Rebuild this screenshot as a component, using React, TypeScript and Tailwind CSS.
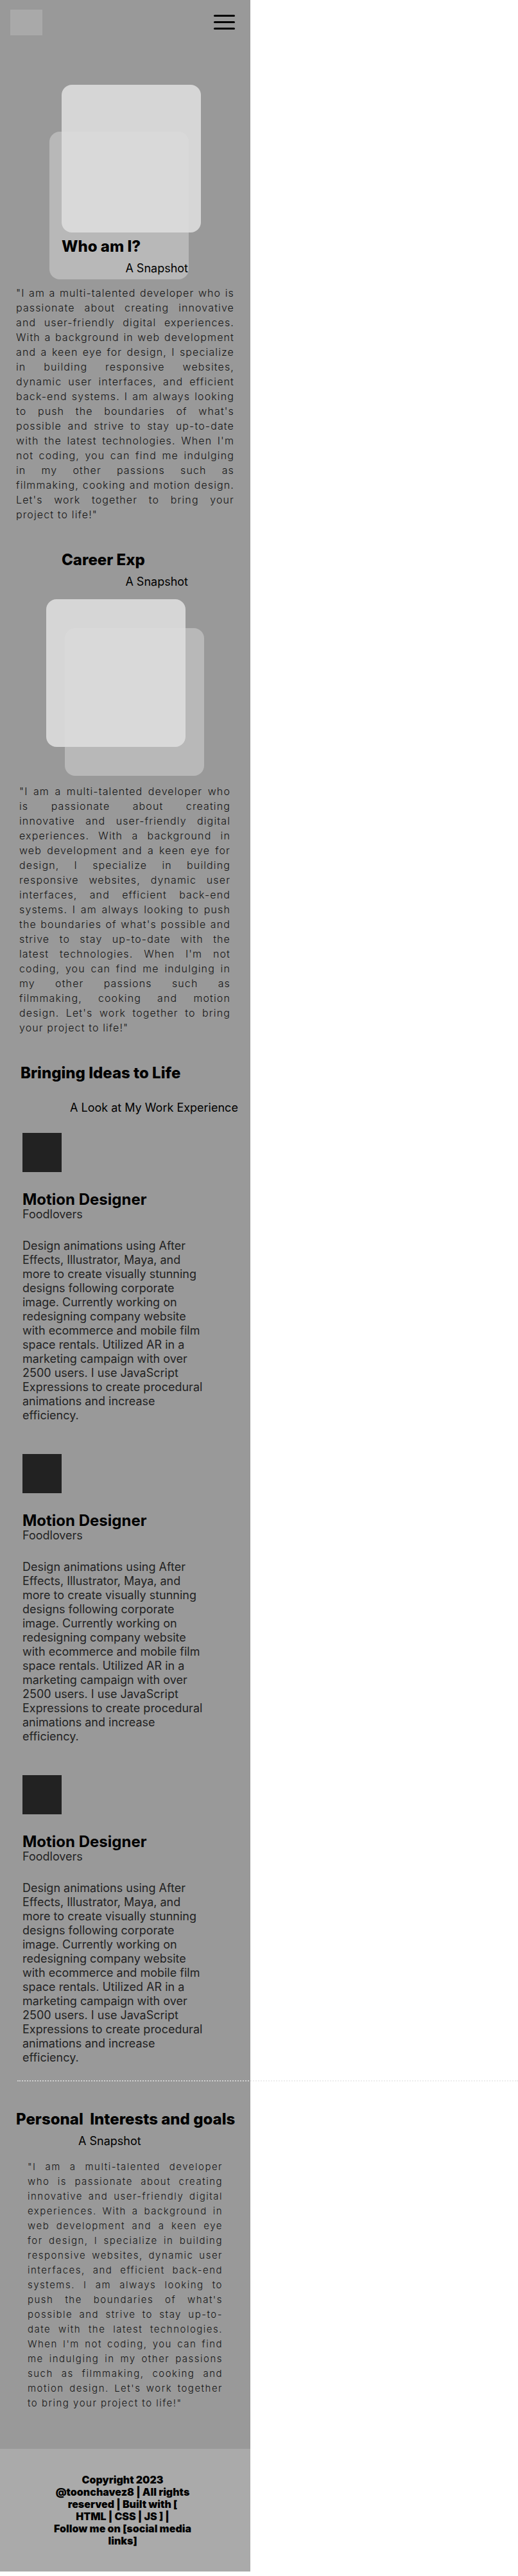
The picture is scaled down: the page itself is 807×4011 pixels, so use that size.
const bio =
  "\"I am a multi-talented developer who is passionate about creating innovative and user-friendly digital experiences. With a background in web development and a keen eye for design, I specialize in building responsive websites, dynamic user interfaces, and efficient back-end systems. I am always looking to push the boundaries of what's possible and strive to stay up-to-date with the latest technologies. When I'm not coding, you can find me indulging in my other passions such as filmmaking, cooking and motion design. Let's work together to bring your project to life!\"";

const jobs = [
  {
    title: "Motion Designer",
    company: "Foodlovers",
    text: "Design animations using After Effects, Illustrator, Maya, and more to create visually stunning designs following corporate image. Currently working on redesigning company website with ecommerce and mobile film space rentals. Utilized AR in a marketing campaign with over 2500 users. I use JavaScript Expressions to create procedural animations and increase efficiency.",
  },
  {
    title: "Motion Designer",
    company: "Foodlovers",
    text: "Design animations using After Effects, Illustrator, Maya, and more to create visually stunning designs following corporate image. Currently working on redesigning company website with ecommerce and mobile film space rentals. Utilized AR in a marketing campaign with over 2500 users. I use JavaScript Expressions to create procedural animations and increase efficiency.",
  },
  {
    title: "Motion Designer",
    company: "Foodlovers",
    text: "Design animations using After Effects, Illustrator, Maya, and more to create visually stunning designs following corporate image. Currently working on redesigning company website with ecommerce and mobile film space rentals. Utilized AR in a marketing campaign with over 2500 users. I use JavaScript Expressions to create procedural animations and increase efficiency.",
  },
];

function Header() {
  return (
    <header className="flex items-start justify-between pt-[15px] pl-[16px] pr-[24px]">
      <div className="h-[40px] w-[50px] bg-[#a9a9a9]" />
      <button className="mt-[8px] flex w-[33px] flex-col gap-[7px]">
        <span className="h-[3px] w-full rounded-full bg-black" />
        <span className="h-[3px] w-full rounded-full bg-black" />
        <span className="h-[3px] w-full rounded-full bg-black" />
      </button>
    </header>
  );
}

function JobCard({ title, company, text }: { title: string; company: string; text: string }) {
  return (
    <article className="ml-[35px] mb-[49px]">
      <div className="h-[61px] w-[61px] bg-[#222222]" />
      <h3 className="mt-[31px] text-[24px] leading-[24px] font-bold text-black">{title}</h3>
      <p className="text-[18px] leading-[22px] text-[#222222]">{company}</p>
      <p className="mt-[27px] w-[288px] text-[18px] leading-[22px] text-[#222222]">{text}</p>
    </article>
  );
}

export default function App() {
  return (
    <div className="w-[390px] bg-[#999999] font-['Inter',sans-serif]">
      <Header />

      <section className="relative mt-[77px] ml-[96px] w-[217px]">
        <div className="absolute left-[-19px] top-[73px] h-[230px] w-[217px] rounded-2xl bg-[#b8b8b8]" />
        <div className="relative h-[230px] w-[217px] rounded-2xl bg-[#dddddd]/90" />
        <h2 className="relative mt-[7px] text-[24px] leading-[29px] font-extrabold text-black">Who am I?</h2>
        <p className="relative mt-[9px] w-[197px] text-right text-[18px] leading-[22px] text-black">A Snapshot</p>
      </section>

      <p className="mt-[16px] ml-[25px] w-[340px] text-justify text-[16px] leading-[23px] font-light tracking-[0.07em] text-[#141414]">
        {bio}
      </p>

      <section className="mt-[44px]">
        <div className="ml-[96px] w-[197px]">
          <h2 className="text-[24px] leading-[29px] font-extrabold text-black">Career Exp</h2>
          <p className="mt-[9px] text-right text-[18px] leading-[22px] text-black">A Snapshot</p>
        </div>
        <div className="relative mt-[16px] ml-[72px] h-[230px] w-[217px]">
          <div className="absolute left-[29px] top-[45px] h-[230px] w-[217px] rounded-2xl bg-[#b8b8b8]" />
          <div className="relative h-[230px] w-[217px] rounded-2xl bg-[#dddddd]/90" />
        </div>
        <p className="mt-[58px] ml-[30px] w-[329px] text-justify text-[16px] leading-[23px] font-light tracking-[0.07em] text-[#141414]">
          {bio}
        </p>
      </section>

      <section className="mt-[44px]">
        <h2 className="ml-[32px] text-[24px] leading-[29px] font-extrabold text-black">Bringing Ideas to Life</h2>
        <p className="mt-[29px] ml-[109px] text-[18px] leading-[22px] text-black">A Look at My Work Experience</p>
        <div className="mt-[28px]">
          {jobs.map((job, i) => (
            <JobCard key={i} {...job} />
          ))}
        </div>
      </section>

      <div className="-mt-[25px] ml-[27px] w-[780px] border-t-2 border-dotted border-[#e5e5e5]/70" />

      <section className="mt-[44px] pb-[60px]">
        <h2 className="ml-[25px] text-[24px] leading-[29px] font-extrabold whitespace-nowrap text-black">
          Personal&nbsp; Interests and goals
        </h2>
        <p className="mt-[9px] ml-[122px] text-[18px] leading-[22px] text-black">A Snapshot</p>
        <p className="mt-[17px] ml-[43px] w-[304px] text-justify text-[15px] leading-[23px] font-light tracking-widest text-[#141414]">
          {bio}
        </p>
      </section>

      <footer className="bg-[#aaaaaa] pt-[39px] pb-[38px]">
        <p className="ml-[76px] w-[230px] text-center text-[16px] leading-[19px] font-black text-black">
          Copyright 2023
          <br />
          @toonchavez8 | All rights
          <br />
          reserved | Built with [
          <br />
          HTML | CSS | JS ] |
          <br />
          Follow me on [social media
          <br />
          links]
        </p>
      </footer>
    </div>
  );
}
